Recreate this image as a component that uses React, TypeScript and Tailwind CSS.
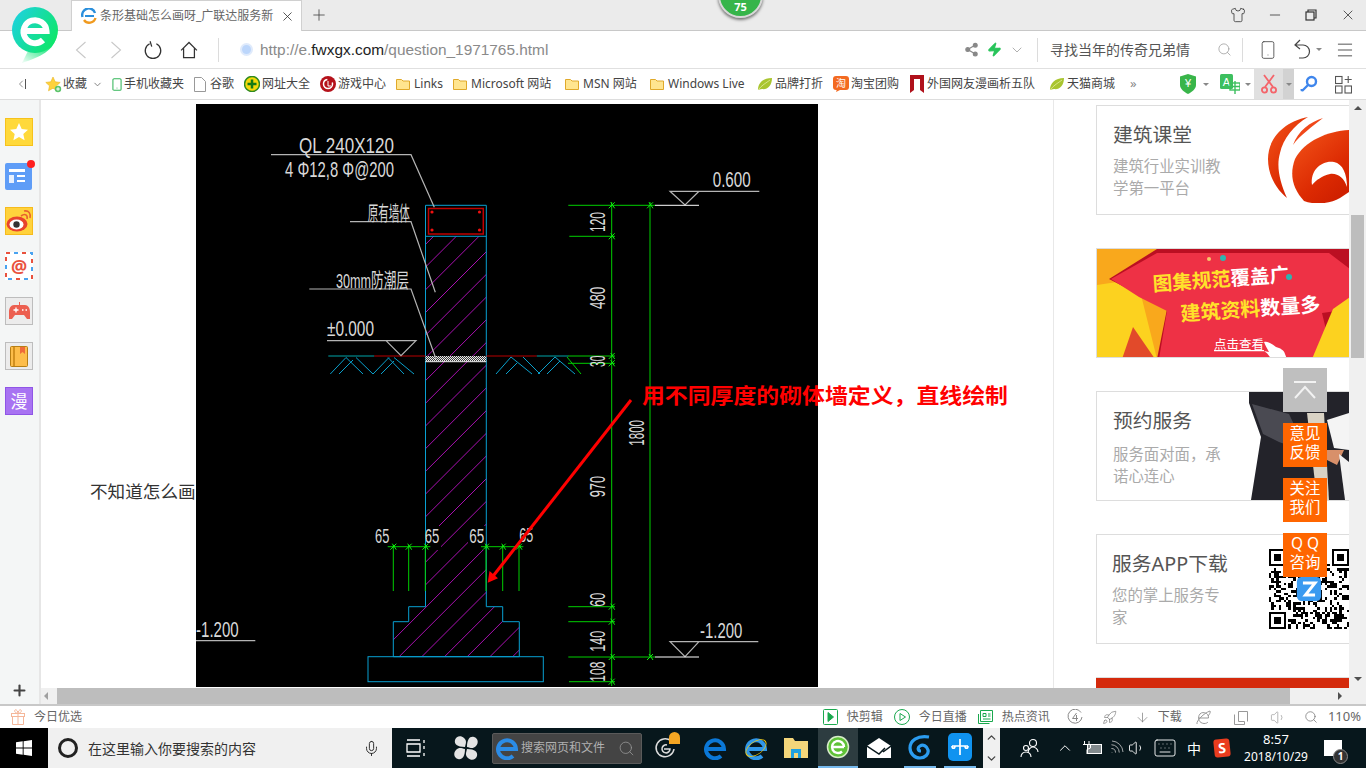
import React from 'react';
import {
  ArrowDown, ChevronDown, ChevronLeft, ChevronUp, Keyboard, Menu, Mic, Minus, Plus,
  Rocket, Search, Share2, Shirt, Smartphone, Volume1, Wifi, X, Zap,
} from 'lucide-react';

const CAD_FONT = '"Liberation Sans", "Noto Sans CJK SC", sans-serif';

// --- small drawings -------------------------------------------------------

const Folder = () => (
  <svg width="14" height="14" viewBox="0 0 14 14">
    <path d="M.5 2.5h5l1.5 1.5h6.500v8.500H.5z" fill="#ffe58f" stroke="#e0a92a" />
  </svg>
);

const Leaf = () => (
  <svg width="16" height="14" viewBox="0 0 16 14">
    <path d="M1 13C1 6 6 1 15 1c0 8-5 12-10 11-2 0-3 1-4 1z" fill="#a9c52f" />
    <path d="M1 13C5 8 9 6 13 3" stroke="#d7e58a" fill="none" />
  </svg>
);

const StarIcon = () => (
  <svg width="17" height="17" viewBox="0 0 17 17">
    <path d="M8 1l2.200 4.800 5 .6-3.700 3.400 1 5-4.500-2.600-4.500 2.600 1-5L.8 6.400l5-.6z" fill="#ffd23c" stroke="#e8b422" strokeWidth=".6" />
    <circle cx="13" cy="13" r="3.200" fill="#5cc46a" />
    <path d="M11.200 13h3.600M13 11.200v3.600" stroke="#fff" />
  </svg>
);

const Globe360 = () => (
  <svg width="16" height="16" viewBox="0 0 16 16">
    <circle cx="8" cy="8" r="7.500" fill="#f5d90a" stroke="#2f8a1f" strokeWidth="1.500" />
    <path d="M8 3.500v9M3.500 8h9" stroke="#157a15" strokeWidth="2.500" />
  </svg>
);

const GameBadge = () => (
  <svg width="16" height="16" viewBox="0 0 16 16">
    <circle cx="8" cy="8" r="8" fill="#b5121b" />
    <circle cx="8" cy="8" r="4.500" fill="none" stroke="#fff" strokeWidth="1.500" strokeDasharray="20 6" />
    <path d="M8 5v5h3" stroke="#fff" fill="none" />
  </svg>
);

const NavChevron = ({ flip = false }: { flip?: boolean }) => (
  <svg width="12" height="18" viewBox="0 0 12 18" fill="none" stroke="#c8c8c8" strokeWidth="1.100">
    <path d={flip ? 'M1.500 1l9 8-9 8' : 'M10.500 1l-9 8 9 8'} />
  </svg>
);

const ReloadIcon = () => (
  <svg width="20" height="20" viewBox="0 0 24 24" fill="none" stroke="#333" strokeWidth="1.500">
    <path d="M8 4.500a9.300 9.300 0 1 0 8 0M8.500 1.500L10.500 8" />
  </svg>
);

const HomeIcon = () => (
  <svg width="20" height="20" viewBox="0 0 24 24" fill="none" stroke="#333" strokeWidth="1.500">
    <path d="M2.500 12.500L12 3l9.500 9.500M5.500 10v11h13V10" />
  </svg>
);

const UndoIcon = () => (
  <svg width="20" height="22" viewBox="0 0 20 22" fill="none" stroke="#444" strokeWidth="1.200">
    <path d="M7 1L2 6l5 4M2 6h8a6.500 6.500 0 0 1 0 13H6" />
  </svg>
);

const RestoreIcon = () => (
  <svg width="12" height="12" viewBox="0 0 12 12" fill="none" stroke="#333" strokeWidth="1.200">
    <path d="M3 3V1h8v8H9" />
    <rect x="1" y="3" width="8" height="8" />
  </svg>
);

const ShieldIcon = () => (
  <svg width="16" height="20" viewBox="0 0 16 20">
    <path d="M8 0l8 2.500V11c0 4-4 7-8 9-4-2-8-5-8-9V2.500z" fill="#39b54a" />
    <text x="8" y="13" textAnchor="middle" fontSize="11" fill="#fff" fontFamily={CAD_FONT}>¥</text>
  </svg>
);

const TranslateIcon = () => (
  <svg width="20" height="20" viewBox="0 0 20 20">
    <rect width="13" height="15" rx="1.500" fill="#3dbf5f" />
    <text x="6.500" y="12" textAnchor="middle" fontSize="11" fill="#fff" fontFamily={CAD_FONT}>A</text>
    <rect x="10" y="9" width="10" height="7" fill="none" stroke="#3dbf5f" strokeWidth="1.400" />
    <path d="M15 7v13M10 12.500h10" stroke="#3dbf5f" strokeWidth="1.400" />
  </svg>
);

const ScissorsIcon = () => (
  <svg width="16" height="20" viewBox="0 0 16 20" fill="none" stroke="#f4646a" strokeWidth="1.800">
    <path d="M3 1l9 12M13 1L4 13" />
    <circle cx="3.500" cy="16" r="2.600" />
    <circle cx="12.500" cy="16" r="2.600" />
  </svg>
);

const KeyIcon = () => (
  <svg width="18" height="18" viewBox="0 0 18 18" fill="none" stroke="#3f86ec" strokeWidth="2.400">
    <circle cx="11.500" cy="6.500" r="4.500" />
    <path d="M8 10L2 16M2 16l-.5-2" />
  </svg>
);

const AppsIcon = () => (
  <svg width="17" height="19" viewBox="0 0 17 19" fill="none" stroke="#555" strokeWidth="1.100">
    <rect x=".5" y="1.500" width="6.500" height="7" />
    <rect x=".5" y="11" width="6.500" height="7" />
    <rect x="10" y="11" width="6.500" height="7" />
    <path d="M13.200 1v7M9.700 4.500h7" />
  </svg>
);

const TaobaoIcon = () => (
  <svg width="16" height="16" viewBox="0 0 16 16">
    <rect width="16" height="14" rx="3" fill="#f36a21" />
    <path d="M4 13l-1 3 4-2z" fill="#f36a21" />
    <text x="8" y="11" textAnchor="middle" fontSize="10" fill="#fff" fontFamily={CAD_FONT}>淘</text>
  </svg>
);

const RibbonIcon = () => (
  <svg width="14" height="18" viewBox="0 0 14 18">
    <path d="M0 0h14v18l-4-3V4H4v11l-4 3z" fill="#b0111b" />
  </svg>
);

const LogoE9 = () => (
  <svg width="46" height="56" viewBox="0 0 46 56">
    <defs>
      <linearGradient id="logoGrad" x1="0" y1="0" x2="1" y2="0.6">
        <stop offset="0" stopColor="#1fd0ea" />
        <stop offset="1" stopColor="#0fe66c" />
      </linearGradient>
      <linearGradient id="logoTail" x1="0.9" y1="0" x2="0.1" y2="1">
        <stop offset="0.3" stopColor="#12e378" />
        <stop offset="1" stopColor="#12e378" stopOpacity="0.1" />
      </linearGradient>
    </defs>
    <path d="M45 28C42 44 28 50 10 56l8-16z" fill="url(#logoTail)" />
    <circle cx="23" cy="23" r="23" fill="url(#logoGrad)" />
    <path d="M12 24h22.500A11.500 11.500 0 1 0 31 33" fill="none" stroke="#fff" strokeWidth="6" />
  </svg>
);

const TabFavicon = () => (
  <svg width="16" height="16" viewBox="0 0 16 16" fill="none" strokeWidth="2.400">
    <path d="M1.500 9A6.500 6.500 0 0 1 14 5" stroke="#2a8fdc" />
    <path d="M4 8h9" stroke="#2a8fdc" strokeWidth="2" />
    <path d="M14.500 10A6.500 6.500 0 0 1 3 12" stroke="#f09a1f" />
  </svg>
);

// --- sidebar --------------------------------------------------------------

const SideYellowStar = () => (
  <div className="w-[28px] h-[28px] bg-[#ffd93b] border border-[#f6c21c] flex items-center justify-center">
    <svg width="20" height="20" viewBox="0 0 20 20"><path d="M10 1l2.700 6 6.300.7-4.700 4.300 1.300 6.300L10 15l-5.600 3.300L5.700 12 1 7.700 7.300 7z" fill="#fff" /></svg>
  </div>
);

const SideNews = () => (
  <div className="relative w-[27px] h-[27px] rounded-[2px] bg-[#5f9df7] flex items-center justify-center">
    <svg width="20" height="16" viewBox="0 0 20 16" fill="#fff">
      <rect y="0" width="16" height="3" />
      <rect y="6" width="5" height="8" opacity=".85" />
      <rect x="8" y="6" width="8" height="2" />
      <rect x="8" y="11" width="8" height="2" />
    </svg>
    <span className="absolute -top-[3px] -right-[3px] w-[8px] h-[8px] rounded-full bg-[#ff2020]" />
  </div>
);

const SideWeibo = () => (
  <div className="w-[28px] h-[28px] bg-[#ffd23c] border border-[#f6bb1c] flex items-center justify-center">
    <svg width="26" height="24" viewBox="0 0 26 24">
      <ellipse cx="11" cy="15" rx="10.500" ry="7.500" fill="#e8432d" />
      <ellipse cx="10.500" cy="15.500" rx="7" ry="5" fill="#fff" />
      <circle cx="10.500" cy="15.500" r="3.200" fill="#333" />
      <path d="M15 7c4-3 7-1 6 3M18 2c5-1 7 3 6 7" stroke="#e8612d" fill="none" strokeWidth="1.600" />
    </svg>
  </div>
);

const SideMail = () => (
  <div className="relative w-[28px] h-[28px] flex items-center justify-center bg-white">
    <svg className="absolute inset-0" width="28" height="28" viewBox="0 0 28 28" fill="none" strokeWidth="2">
      <rect x="1" y="1" width="26" height="26" stroke="#e9523e" strokeDasharray="4 12" />
      <rect x="1" y="1" width="26" height="26" stroke="#4aa3f0" strokeDasharray="4 12" strokeDashoffset="8" />
    </svg>
    <span className="text-[18px] leading-none font-bold text-[#e9523e]">@</span>
  </div>
);

const SideGame = () => (
  <div className="w-[28px] h-[28px] bg-[#ececec] border border-[#bdbdbd] flex items-center justify-center">
    <svg width="21" height="18" viewBox="0 0 21 18">
      <path d="M10 0h1v3h5c3 0 5 3 5 7v7h-3l-3-4H6l-3 4H0v-7c0-4 2-7 5-7h5z" fill="#ec5f50" />
      <path d="M4.500 8h5M7 5.500v5M13 8h1.500M16.500 8H18" stroke="#fff" strokeWidth="1.300" />
    </svg>
  </div>
);

const SideBook = () => (
  <div className="w-[28px] h-[28px] bg-[#ececec] border border-[#bdbdbd] flex items-center justify-center">
    <svg width="18" height="21" viewBox="0 0 18 21">
      <rect x=".5" y=".5" width="17" height="20" rx="1" fill="#fdbd4a" stroke="#b77f14" />
      <rect x="3" y="1" width="2" height="19" fill="#d2901f" />
      <path d="M10 1h5v7l-2.500-2-2.500 2z" fill="#ef6a3a" />
    </svg>
  </div>
);

const SideManga = () => (
  <div className="w-[28px] h-[28px] bg-[#a873f2] border border-[#8f55e6] flex items-center justify-center text-white text-[17px] leading-none">
    漫
  </div>
);

// --- CAD drawing ----------------------------------------------------------

type CadTextProps = { x: number; y: number; w: number; size?: number; fill?: string; rotate?: boolean; children: string };

const CadText = ({ x, y, w, size = 22, fill = '#d8d8d8', rotate = false, children }: CadTextProps) => (
  <text
    transform={rotate ? `translate(${x} ${y}) rotate(-90)` : `translate(${x} ${y})`}
    textLength={w}
    lengthAdjust="spacingAndGlyphs"
    fontSize={size}
    fill={fill}
    fontFamily={CAD_FONT}
  >
    {children}
  </text>
);

const HATCH = Array.from({ length: 23 }, (_, i) => 528.8 + 22.7 * (i - 7));

const TICKS: [number, number][] = [
  [415.7, 101.3], [415.7, 132.3], [415.7, 252], [415.7, 259.3], [415.7, 502.7], [415.7, 517.7], [415.7, 553], [415.7, 577.7],
  [454, 101.3], [454, 553],
  [197.3, 442.7], [212.7, 442.7], [229.3, 442.7], [290, 442.7], [306.7, 442.7], [323, 442.7],
];

const BLUE = '#08a0d2';
const GREEN = '#00cf00';
const LEADER = '#b4b4b4';

const Drawing = () => (
  <svg width="622" height="583" viewBox="0 0 622 583" className="block bg-black overflow-visible">
    <defs>
      <clipPath id="wallClip">
        <path d="M229.500 132.300H290.300V502.700H306.700V517.700H323.300V552.700H197.300V517.700H212.700V502.700H229.500Z" />
      </clipPath>
      <pattern id="damp" width="2" height="2" patternUnits="userSpaceOnUse">
        <rect width="2" height="2" fill="#3a3a3a" />
        <rect width="1" height="1" fill="#e8e8e8" />
        <rect x="1" y="1" width="1" height="1" fill="#e8e8e8" />
      </pattern>
    </defs>

    {/* hatch */}
    <g clipPath="url(#wallClip)" stroke="#a810b0" strokeWidth="1">
      {HATCH.map((c) => (
        <line key={c} x1={150} y1={c - 150} x2={400} y2={c - 400} />
      ))}
    </g>
    <rect x="231" y="422" width="14" height="24" fill="#000" />
    <rect x="272" y="422" width="17" height="24" fill="#000" />

    {/* wall outline */}
    <g fill="none" stroke={BLUE} strokeWidth="1">
      <path d="M229.500 101.300H290.300V502.700H306.700V517.700H323.300V552.700H197.300V517.700H212.700V502.700H229.500Z" />
      <path d="M229.500 132.300H290.300" />
      <rect x="172" y="552.700" width="175.300" height="25" />
    </g>

    {/* beam rebar */}
    <rect x="232.500" y="104.500" width="54.800" height="25.500" fill="none" stroke="#c00000" strokeWidth="1.500" />
    <g fill="#f01010">
      <circle cx="236" cy="108" r="1.600" />
      <circle cx="283.500" cy="108" r="1.600" />
      <circle cx="236" cy="126" r="1.600" />
      <circle cx="283.500" cy="126" r="1.600" />
    </g>

    {/* damp proof layer and ground */}
    <rect x="229.500" y="252" width="60.800" height="5" fill="url(#damp)" />
    <path d="M229.500 257.700H290.300" stroke="#fff" />
    <path d="M132.300 252H178.300M340.700 252H372.300" stroke="#00a3a8" strokeWidth="1.200" />
    <path d="M178.300 252H229.500M290.300 252H340.700" stroke="#b80000" strokeWidth="1.200" />
    <path
      d="M134.300 270L150 253.500M143 270L157 256M150 253.500L167 270M160 253.500L177 270M177 270L193 253.500M185 270L198 257M198 253.500L218 270M192 253.500L208 270M300 270L315 253M310 270L321 259M315 253L336 270M327 253L344 270M342 270L359 253M351 270L364 257M359 253L379 270"
      fill="none"
      stroke="#0aa0cc"
    />
    <path d="M371 253L385 270" stroke={GREEN} />

    {/* leaders and labels */}
    <g fill="none" stroke={LEADER} strokeWidth="1.200">
      <path d="M75 50.700H215L238.300 103.300" />
      <path d="M154 117.700H215L239.300 188.300" />
      <path d="M113.300 185H215L240 255" />
      <path d="M131 236.700H220L205 251.700L190 236.700" />
      <path d="M563.300 87.300H474L489 101L503 87.300" />
      <path d="M562.300 537.700H474L489 552.700L503 537.700" />
      <path d="M0 536.700H59.300" />
    </g>
    <path d="M459 101.300H503M459 553H503" stroke="#fff" />
    <CadText x={103} y={49} w={95}>QL  240X120</CadText>
    <CadText x={89} y={72.700} w={109}>4 Φ12,8 Φ@200</CadText>
    <CadText x={171.700} y={116.700} w={42} size={20}>原有墙体</CadText>
    <CadText x={140} y={184} w={73} size={20}>30mm防潮层</CadText>
    <CadText x={131} y={232.300} w={47}>±0.000</CadText>
    <CadText x={516.700} y={82.700} w={38}>0.600</CadText>
    <CadText x={504} y={533.700} w={42.300}>-1.200</CadText>
    <CadText x={0} y={532.700} w={42.700}>-1.200</CadText>

    {/* dimensions */}
    <g fill="none" stroke={GREEN} strokeWidth="1">
      <path d="M415.700 98V582M454 98V552.700" />
      <path d="M372.300 101.300H459M373.300 132.300H419M372 252H419M372 259.300H419M372.300 502.700H419M372.300 517.700H419M372.300 553H459M373 577.700H419" />
      <path d="M191.700 442.700H234.300M285 442.700H327.300" />
      <path d="M197.300 441V487M212.700 441V487M229.300 441V487M290 441V487M306.700 441V487M323 441V487" />
    </g>
    <g stroke="#10ee10" strokeWidth="1">
      {TICKS.map(([x, y]) => (
        <path key={`${x}-${y}`} d={`M${x - 3} ${y + 3}L${x + 3} ${y - 3}M${x - 1} ${y - 3}L${x + 3} ${y + 3}`} />
      ))}
    </g>
    <CadText x={409.300} y={128} w={20} rotate>120</CadText>
    <CadText x={409.300} y={205} w={22.300} rotate>480</CadText>
    <CadText x={409.300} y={263} w={11.300} rotate>30</CadText>
    <CadText x={447.700} y={341.700} w={25.700} rotate>1800</CadText>
    <CadText x={409} y={393.300} w={21.300} rotate>970</CadText>
    <CadText x={409} y={502.700} w={14} rotate>60</CadText>
    <CadText x={409} y={547.700} w={21} rotate>140</CadText>
    <CadText x={409} y={577.700} w={20} rotate>108</CadText>
    <CadText x={179} y={438.700} w={14.300} size={20}>65</CadText>
    <CadText x={228.700} y={438.700} w={14.600} size={20}>65</CadText>
    <CadText x={273.300} y={438.700} w={15} size={20}>65</CadText>
    <CadText x={323.300} y={437.700} w={14} size={20}>65</CadText>

    {/* annotation */}
    <path d="M435 296L294 476" stroke="#ff0000" strokeWidth="3" />
    <path d="M291.700 478.700L293.500 467L302 474.300Z" fill="#ff0000" />
    <text x={446} y={299} textLength={366} lengthAdjust="spacingAndGlyphs" fontSize="21" fontWeight="700" fill="#ff0000" fontFamily='"Liberation Serif", "Noto Sans CJK SC", serif'>
      用不同厚度的砌体墙定义，直线绘制
    </text>
  </svg>
);

// --- right column cards ---------------------------------------------------

const SwirlLogo = () => (
  <svg width="81" height="86" viewBox="0 0 81 86">
    <defs>
      <linearGradient id="swirlA" x1="0" y1="0" x2="0.7" y2="1">
        <stop offset="0" stopColor="#f4561a" />
        <stop offset="0.7" stopColor="#dc2a02" />
        <stop offset="1" stopColor="#cf2000" />
      </linearGradient>
    </defs>
    <path d="M40 0C15 5 0 22 0 42c0 16 8 30 19 39C12 65 8 50 12 36 15 22 26 8 40 0z" fill="url(#swirlA)" />
    <path d="M55 1C42 5 30 14 25 28 32 18 44 10 55 1z" fill="#f0481a" />
    <path d="M81 13C60 14 36 24 27 42c-6 16-2 30 9 42 10 4 26 3 36-3l9-6z" fill="url(#swirlA)" />
    <path d="M44 68c-2-15 10-25 22-23 9 2 13 12 13 25-3-9-9-14-17-13-8 2-14 6-18 11z" fill="#fff" />
  </svg>
);

const SuitPhoto = () => (
  <svg width="100" height="108" viewBox="0 0 100 108">
    <path d="M0 0H100V108H2L12 45 0 11z" fill="#23232a" />
    <path d="M3 12L40 22 58 60 30 50 14 42z" fill="#4a4a52" />
    <path d="M58 21H75L80 108H68z" fill="#d9d2c4" />
    <path d="M78 28L100 21V58L85 56z" fill="#f4f4f4" />
    <path d="M78 58H95L88 73 78 68z" fill="#d8906a" />
    <path d="M90 62L100 70V108H96z" fill="#f2f2f2" />
  </svg>
);

const QR_SIZE = 33;
const inFinder = (r: number, c: number) =>
  (r < 8 && c < 8) || (r < 8 && c >= QR_SIZE - 8) || (r >= QR_SIZE - 8 && c < 8);
const finderOn = (r: number, c: number) => {
  const rr = r >= QR_SIZE - 8 ? r - (QR_SIZE - 7) : r;
  const cc = c >= QR_SIZE - 8 ? c - (QR_SIZE - 7) : c;
  if (rr < 0 || cc < 0 || rr > 6 || cc > 6) return false;
  return rr === 0 || rr === 6 || cc === 0 || cc === 6 || (rr >= 2 && rr <= 4 && cc >= 2 && cc <= 4);
};
const QR_CELLS: [number, number][] = [];
for (let r = 0; r < QR_SIZE; r++) {
  for (let c = 0; c < QR_SIZE; c++) {
    const on = inFinder(r, c) ? finderOn(r, c) : ((r * 31 + c * 17) ^ (r * c * 5)) % 5 < 2;
    if (on) QR_CELLS.push([r, c]);
  }
}

const QrCode = () => (
  <svg width="80" height="80" viewBox="0 0 33 33" shapeRendering="crispEdges">
    {QR_CELLS.map(([r, c]) => (
      <rect key={`${r}-${c}`} x={c} y={r} width="1" height="1" fill="#000" />
    ))}
    <rect x="11.500" y="11.500" width="10" height="10" rx="2" fill="#3a9af0" shapeRendering="auto" />
    <path d="M14 14h5l-4 5h4" fill="none" stroke="#fff" strokeWidth="1.200" shapeRendering="auto" />
  </svg>
);

const PromoBanner = () => (
  <svg width="253" height="110" viewBox="0 0 253 110" className="block">
    <rect width="253" height="110" fill="#f9a81c" />
    <path d="M0 110V36L40 30 60 110z" fill="#fcd21f" />
    <path d="M12 30L60 0H253V60L215 110H60L70 60z" fill="#bb0f22" />
    <path d="M60 4H232L253 20V60L225 64 236 110H62L70 62 42 48 14 30z" fill="#ee3145" />
    <path d="M215 110L236 60 253 48V110z" fill="#fcd21f" />
    <path d="M25 110L36 78 58 110z" fill="#e24a2a" />
    <circle cx="112" cy="10" r="2" fill="#f6c76b" />
    <circle cx="192" cy="28" r="3" fill="#2eb5b0" />
    <circle cx="126" cy="9" r="3" fill="#2eb5b0" />
    <g transform="rotate(-4 56 38)" fontFamily='"Noto Sans CJK SC", sans-serif' fontWeight="700" fontSize="19.500">
      <text x="56" y="42" fill="#ffe22a">图集规范<tspan fill="#fff">覆盖广</tspan></text>
    </g>
    <g transform="rotate(-4 84 72)" fontFamily='"Noto Sans CJK SC", sans-serif' fontWeight="700" fontSize="20">
      <text x="84" y="72" fill="#ffe22a">建筑资料<tspan fill="#fff">数量多</tspan></text>
    </g>
    <text x="117" y="100" fontSize="12.500" fill="#fff" textDecoration="underline" fontFamily='"Noto Sans CJK SC", sans-serif'>点击查看</text>
    <path d="M167 93c4-1 8 2 12 5 4 1 8 3 9 7l2 5h-16c-2-4-4-6-7-8l5 1c-2-4-4-7-5-10z" fill="#fff" />
  </svg>
);

type CardProps = { title: string; desc: string; children: React.ReactNode; titleClass?: string; descClass?: string };

const ServiceCard = ({ title, desc, children, titleClass = 'pl-[16px]', descClass = 'mt-[7px]' }: CardProps) => (
  <div className="w-[253px] h-[110px] shrink-0 border border-r-0 border-[#dddddd] flex justify-between items-center overflow-hidden">
    <div className={`${titleClass} self-start pt-[15px]`}>
      <div className="text-[19.800px] leading-[28px] text-[#555555] whitespace-nowrap">{title}</div>
      <div className={`${descClass} w-[110px] text-[15.400px] leading-[22px] text-[#aaaaaa]`}>{desc}</div>
    </div>
    {children}
  </div>
);

// --- browser chrome data ---------------------------------------------------

type Bookmark = { label: string; icon: React.ReactNode; box: string; iconBox: string };

const BOOKMARKS: Bookmark[] = [
  { label: '手机收藏夹', icon: <Smartphone size={15} strokeWidth={1.800} className="-ml-[1px] text-[#35b65a]" />, box: 'w-[83px]', iconBox: 'w-[13px]' },
  { label: '谷歌', icon: <svg width="12" height="15" viewBox="0 0 12 15" fill="#fff" stroke="#999"><path d="M.5.500h7l4 4v10H.5z" /></svg>, box: 'w-[50px]', iconBox: 'w-[16px]' },
  { label: '网址大全', icon: <Globe360 />, box: 'w-[76px]', iconBox: 'w-[18px]' },
  { label: '游戏中心', icon: <GameBadge />, box: 'w-[76px]', iconBox: 'w-[18px]' },
  { label: 'Links', icon: <Folder />, box: 'w-[57px]', iconBox: 'w-[18px]' },
  { label: 'Microsoft 网站', icon: <Folder />, box: 'w-[112px]', iconBox: 'w-[18px]' },
  { label: 'MSN 网站', icon: <Folder />, box: 'w-[85px]', iconBox: 'w-[18px]' },
  { label: 'Windows Live', icon: <Folder />, box: 'w-[107px]', iconBox: 'w-[18px]' },
  { label: '品牌打折', icon: <Leaf />, box: 'w-[76px]', iconBox: 'w-[18px]' },
  { label: '淘宝团购', icon: <TaobaoIcon />, box: 'w-[77px]', iconBox: 'w-[18px]' },
  { label: '外国网友漫画析五队', icon: <RibbonIcon />, box: 'w-[139px]', iconBox: 'w-[17px]' },
  { label: '天猫商城', icon: <Leaf />, box: 'w-[81px]', iconBox: 'w-[18px]' },
];

const TinyCaret = () => <span className="block w-0 h-0 border-x-[3px] border-x-transparent border-t-[3px] border-t-[#888888]" />;

const TabBar = () => (
  <div className="h-[31px] shrink-0 bg-[#ebebeb] border-b border-[#c8c8c8] flex items-end">
    <div className="relative ml-[71px] -mb-px w-[231px] h-[31px] bg-white border-x border-t border-[#d0d0d0] flex items-center pl-[9px]">
      <TabFavicon />
      <span className="ml-[3px] w-[174px] whitespace-nowrap text-[12px] text-[#666666]">条形基础怎么画呀_广联达服务新</span>
      <X size={15} strokeWidth={1.300} className="ml-[6px] text-[#333333]" />
    </div>
    <Plus size={18} strokeWidth={1.100} className="ml-[8px] mb-[6px] text-[#444444]" />
    <div className="ml-auto flex items-center h-full text-[#333333]">
      <Shirt size={16} strokeWidth={1.200} />
      <Minus size={16} strokeWidth={1.200} className="ml-[21px]" />
      <span className="ml-[22px]"><RestoreIcon /></span>
      <X size={16} strokeWidth={1.200} className="ml-[23px] mr-[10px]" />
    </div>
  </div>
);

const Toolbar = () => (
  <div className="h-[38px] shrink-0 bg-white border-b border-[#e0e0e0] flex items-center">
    <span className="ml-[75px] flex"><NavChevron /></span>
    <span className="ml-[23px] flex"><NavChevron flip /></span>
    <span className="ml-[21px] flex"><ReloadIcon /></span>
    <span className="ml-[16px] flex"><HomeIcon /></span>
    <span className="ml-[19px] w-px h-[24px] bg-[#dcdcdc]" />
    <span className="ml-[21px] w-[13px] h-[13px] rounded-full bg-[#bcd6fb] border-[2px] border-[#dfeafb]" />
    <span className="ml-[7px] text-[15.400px] text-[#8a8a8a] font-['Liberation_Sans',sans-serif] whitespace-nowrap">
      http://e.<span className="text-[#222222]">fwxgx.com</span>/question_1971765.html
    </span>
    <div className="ml-auto flex items-center">
      <Share2 size={15} fill="#888888" className="text-[#888888]" />
      <Zap size={15} fill="#28c45a" className="ml-[8px] text-[#28c45a]" />
      <ChevronDown size={16} strokeWidth={1} className="ml-[7px] text-[#888888]" />
      <span className="ml-[12px] w-px h-[24px] bg-[#dcdcdc]" />
      <span className="ml-[12px] w-[140px] text-[14px] text-[#555555] whitespace-nowrap">寻找当年的传奇兄弟情</span>
      <Search size={15} strokeWidth={1.200} className="ml-[27px] text-[#999999]" />
      <span className="ml-[10px] w-px h-[24px] bg-[#dcdcdc]" />
      <Smartphone size={20} strokeWidth={1} className="ml-[15px] text-[#444444]" />
      <span className="ml-[15px] flex"><UndoIcon /></span>
      <span className="ml-[3px] flex"><TinyCaret /></span>
      <Menu size={20} strokeWidth={1} className="ml-[13px] mr-[11px] text-[#333333]" />
    </div>
  </div>
);

const BookmarksBar = () => (
  <div className="h-[31px] shrink-0 bg-white border-b border-[#dddddd] flex items-center text-[12px] text-[#444444]">
    <span className="ml-[15px] w-[30px] flex items-center text-[#555555]">
      <ChevronLeft size={12} strokeWidth={1.300} />
      <span className="-ml-[2px] w-px h-[10px] bg-[#555555]" />
    </span>
    <div className="w-[66px] flex items-center">
      <span className="w-[18px] flex"><StarIcon /></span>
      <span>收藏</span>
      <ChevronDown size={11} className="ml-[5px] text-[#777777]" />
    </div>
    {BOOKMARKS.map((b) => (
      <div key={b.label} className={`${b.box} flex items-center whitespace-nowrap`}>
        <span className={`${b.iconBox} flex items-center shrink-0`}>{b.icon}</span>
        <span>{b.label}</span>
      </div>
    ))}
    <span className="text-[13px] text-[#888888]">»</span>
    <div className="ml-auto flex items-center h-full">
      <ShieldIcon />
      <span className="ml-[7px] flex"><TinyCaret /></span>
      <span className="ml-[11px] flex"><TranslateIcon /></span>
      <span className="ml-[5px] flex"><TinyCaret /></span>
      <div className="ml-[3px] h-full flex bg-[#e0e0e0]">
        <span className="w-[29px] flex items-center justify-center"><ScissorsIcon /></span>
        <span className="w-[11px] bg-[#d2d2d2] flex items-center justify-center"><TinyCaret /></span>
      </div>
      <span className="ml-[6px] flex"><KeyIcon /></span>
      <span className="ml-[17px] mr-[14px] flex"><AppsIcon /></span>
    </div>
  </div>
);

const Sidebar = () => (
  <div className="w-[41px] shrink-0 bg-[#f4f6f6] border-r-2 border-[#e6e6e6] flex flex-col items-start pl-[5px] pt-[18px] pb-[5px]">
    <div className="flex flex-col gap-[17px]">
      <SideYellowStar />
      <SideNews />
      <SideWeibo />
      <SideMail />
      <SideGame />
      <SideBook />
      <SideManga />
    </div>
    <Plus size={17} strokeWidth={3} className="mt-auto ml-[6px] text-[#444444]" />
  </div>
);

const ScrollV = () => (
  <div className="w-[17px] shrink-0 bg-[#f0f0f0] flex flex-col items-center">
    <span className="mt-[6px] w-0 h-0 border-x-[4px] border-x-transparent border-b-[4px] border-b-[#505050]" />
    <span className="mt-[105px] w-[13px] h-[143px] bg-[#bdbdbd]" />
    <span className="mt-auto mb-[7px] w-0 h-0 border-x-[4px] border-x-transparent border-t-[4px] border-t-[#505050]" />
  </div>
);

const ScrollH = () => (
  <div className="h-[16px] shrink-0 bg-[#f0f0f0] flex items-center">
    <span className="ml-[3px] w-0 h-0 border-y-[4px] border-y-transparent border-r-[4px] border-r-[#a0a0a0]" />
    <span className="ml-[9px] w-[1233px] h-full bg-[#bdbdbd]" />
    <span className="ml-[48px] w-0 h-0 border-y-[4px] border-y-transparent border-l-[4px] border-l-[#505050]" />
  </div>
);

const Page = () => (
  <div className="flex-1 min-w-0 h-[588px] bg-white flex overflow-hidden">
    <div className="w-[155px] shrink-0 pl-[49px] pt-[378px] whitespace-nowrap text-[17.600px] leading-[26px] text-[#333333]">
      不知道怎么画
    </div>
    <div className="w-[622px] shrink-0 pt-[4px]">
      <Drawing />
    </div>
    <div className="w-[235px] shrink-0" />
    <div className="w-[296px] shrink-0 border-l border-[#e8e8e8] pl-[42px] pt-[5px] flex flex-col gap-[33px]">
      <ServiceCard title="建筑课堂" desc="建筑行业实训教学第一平台">
        <SwirlLogo />
      </ServiceCard>
      <div className="w-[253px] h-[110px] shrink-0 overflow-hidden border border-r-0 border-[#dddddd]">
        <PromoBanner />
      </div>
      <ServiceCard title="预约服务" desc="服务面对面，承诺心连心" descClass="mt-[9px]">
        <SuitPhoto />
      </ServiceCard>
      <ServiceCard title="服务APP下载" desc="您的掌上服务专家" titleClass="pl-[15px]">
        <QrCode />
      </ServiceCard>
      <div className="w-[253px] h-[12px] shrink-0 bg-[#d42a0c] border-t border-[#dddddd]" />
    </div>
  </div>
);

const FloatTools = () => (
  <div className="absolute left-[1283px] top-[368px] w-[44px] flex flex-col gap-[11px] text-white text-[15.400px] leading-[19px] text-center">
    <div className="h-[44px] bg-[#bfbfbf] flex items-center justify-center">
      <svg width="24" height="20" viewBox="0 0 24 20" fill="none" stroke="#f2f2f2" strokeWidth="2">
        <path d="M1 2h22M2 18L12 7l10 11" />
      </svg>
    </div>
    <div className="h-[44px] bg-[#ff6600] pt-px">意见<br />反馈</div>
    <div className="h-[44px] bg-[#ff6600] pt-px">关注<br />我们</div>
    <div className="h-[44px] bg-[#ff6600] pt-px">Q Q<br />咨询</div>
  </div>
);

const StatusBar = () => (
  <div className="h-[24px] shrink-0 bg-white border-t-2 border-[#c8c8c8] flex items-center text-[12px] text-[#666666] whitespace-nowrap">
    <svg className="ml-[10px]" width="16" height="16" viewBox="0 0 16 16" fill="none" stroke="#f5b79a">
      <rect x="1.500" y="4.500" width="13" height="3" />
      <path d="M2.500 7.500v8h11v-8M8 4.500v11M8 4.500C5 4 4 2 5 1s3 1 3 3.500c0-2.500 2-4.500 3-3.500s0 3-3 3.500" />
    </svg>
    <span className="ml-[8px]">今日优选</span>
    <div className="ml-auto flex items-center">
      <svg width="15" height="16" viewBox="0 0 15 16" fill="none" stroke="#1aa84e">
        <rect x=".5" y=".5" width="14" height="15" rx="1" />
        <path d="M5 3.500v9l5.500-4.500z" fill="#1aa84e" />
      </svg>
      <span className="ml-[9px]">快剪辑</span>
      <svg className="ml-[11px]" width="16" height="16" viewBox="0 0 16 16" fill="none" stroke="#1aa84e">
        <circle cx="8" cy="8" r="7.500" />
        <path d="M6 4.500v7L11.500 8z" />
      </svg>
      <span className="ml-[9px]">今日直播</span>
      <svg className="ml-[11px]" width="15" height="16" viewBox="0 0 15 16" fill="none" stroke="#1aa84e">
        <path d="M2.500 1.500h12v11h-12zM.5 5v9.500h11" />
        <path d="M5 4.500h3v3H5zM10 5h2.500M10 7h2.500M5 10h7.500" />
      </svg>
      <span className="ml-[9px]">热点资讯</span>
      <svg className="ml-[17px]" width="16" height="16" viewBox="0 0 16 16" fill="none" stroke="#888888">
        <path d="M14 3.500A7 7 0 1 0 15 8M9.500 4L5.500 9.500H11M9.500 6v6" />
      </svg>
      <Rocket size={15} strokeWidth={1.100} className="ml-[19px] text-[#777777]" />
      <ArrowDown size={15} strokeWidth={1.100} className="ml-[18px] text-[#777777]" />
      <span className="ml-[8px]">下载</span>
      <svg className="ml-[14px]" width="15" height="15" viewBox="0 0 15 15" fill="none" stroke="#999999">
        <path d="M2 8h10.500A5 5 0 0 0 3 5.500C2 9 3 13 8 13.500c2 0 3-.5 4-1.500M1 14C0 11 8 3 14 1c1 1-1 4-2 5" />
      </svg>
      <svg className="ml-[23px]" width="15" height="15" viewBox="0 0 15 15" fill="none" stroke="#999999">
        <path d="M4.500 1.500h9v10M.5 4.500v10h10v-3H4.500v-10" />
      </svg>
      <Volume1 size={17} strokeWidth={1} className="ml-[21px] text-[#999999]" />
      <Search size={14} strokeWidth={1.300} className="ml-[17px] text-[#777777]" />
      <span className="ml-[10px] mr-[5px] text-[13px]">110%</span>
    </div>
  </div>
);

const EdgeE = ({ color }: { color: string }) => (
  <svg width="24" height="24" viewBox="0 0 24 24" fill="none" stroke={color} strokeWidth="4">
    <path d="M3 13h18A9 9 0 1 0 18 20" />
  </svg>
);

const Taskbar = () => (
  <div className="h-[40px] shrink-0 bg-[#07171c] flex items-center whitespace-nowrap text-white">
    <div className="w-[48px] h-full bg-black flex items-center justify-center">
      <svg width="16" height="16" viewBox="0 0 16 16" fill="#fff">
        <path d="M0 2.300L6.700 1.300V7.500H0zM7.600 1.200L16 0V7.500H7.600zM0 8.400H6.700V14.700L0 13.700zM7.600 8.400H16V16L7.600 14.800z" />
      </svg>
    </div>
    <div className="w-[344px] h-full bg-[#f0f0f0] flex items-center text-[14px] text-[#333333]">
      <span className="ml-[10px] w-[20px] h-[20px] rounded-full border-[3px] border-[#222222]" />
      <span className="ml-[10px]">在这里输入你要搜索的内容</span>
      <Mic size={17} strokeWidth={1.300} className="ml-auto mr-[12px] text-[#222222]" />
    </div>
    <svg className="ml-[14px]" width="20" height="18" viewBox="0 0 20 18" fill="none" stroke="#fff" strokeWidth="1.300">
      <path d="M1 1h13M1 17h13M1 5h13v8H1zM18 1v3M18 7v3M18 14v3" />
    </svg>
    <svg className="ml-[27px]" width="26" height="26" viewBox="0 0 26 26" fill="#e4e4e4">
      <path d="M12 12C4 12 1 9 2 5s6-5 9-2 2 5 1 9zM14 12c0-8 3-11 7-10s5 6 2 9-5 2-9 1zM14 14c8 0 11 3 10 7s-6 5-9 2-2-5-1-9zM12 14c0 8-3 11-7 10s-5-6-2-9 5-2 9-1z" />
    </svg>
    <div className="ml-[13px] w-[150px] h-[31px] bg-[#444444] border border-[#5a5a5a] rounded-[2px] flex items-center text-[12px] text-[#b0b0b0]">
      <span className="ml-[2px] flex"><EdgeE color="#2b8ce6" /></span>
      <span className="ml-[2px]">搜索网页和文件</span>
      <Search size={17} strokeWidth={1.100} className="ml-auto mr-[6px] text-[#999999]" />
    </div>
    <div className="relative ml-[12px] w-[22px] h-[22px]">
      <svg width="22" height="22" viewBox="0 0 22 22" fill="none" stroke="#dddddd" strokeWidth="1.500">
        <path d="M17 4A9 9 0 1 0 20 12M13 8a4 4 0 1 0 3 4H10" />
      </svg>
      <span className="absolute -top-[5px] -right-[4px] w-[11px] h-[12px] rounded-t-full bg-[#f5a623]" />
    </div>
    <span className="ml-[27px] flex"><EdgeE color="#0b78d7" /></span>
    <span className="relative ml-[17px] flex">
      <EdgeE color="#2f97ea" />
      <span className="absolute inset-0 rounded-full border border-[#f2c811] rotate-[-35deg] scale-y-[0.55]" />
    </span>
    <svg className="ml-[16px]" width="24" height="22" viewBox="0 0 24 22">
      <path d="M0 1h9l2 3h13v17H0z" fill="#f4d67a" />
      <rect x="7" y="12" width="10" height="9" fill="#1fa1e0" />
      <rect x="10" y="16" width="4" height="5" fill="#f4d67a" />
    </svg>
    <div className="ml-[10px] w-[40px] h-full bg-[#2d3c40] border-b-2 border-[#76b9ed] flex items-center justify-center">
      <svg width="24" height="28" viewBox="0 0 24 28" fill="none">
        <circle cx="12" cy="14" r="10.500" fill="#5fc238" stroke="#d7ecc9" strokeWidth="1.500" />
        <path d="M6 14h12M18 14a6 6 0 1 0-2 4.500" stroke="#fff" strokeWidth="2.400" />
      </svg>
    </div>
    <svg className="ml-[9px]" width="24" height="20" viewBox="0 0 24 20">
      <path d="M0 8L12 0l12 8v12H0z" fill="#fff" />
      <path d="M0 8l12 8 6-6M24 8L16 14" fill="none" stroke="#07171c" strokeWidth="1.500" />
    </svg>
    <div className="ml-[13px] w-[32px] h-full border-b-2 border-[#76b9ed] flex items-center justify-center">
      <svg width="24" height="26" viewBox="0 0 24 26" fill="none" stroke="#2b9cf0" strokeWidth="3.200">
        <path d="M21 3C9 1 2 7 2 14c0 6 5 10 10 10s9-4 8-8-5-6-8-4-2 5 1 5" />
      </svg>
    </div>
    <div className="ml-[8px] w-[32px] h-full border-b-2 border-[#76b9ed] flex items-center justify-center">
      <div className="w-[24px] h-[28px] rounded-[5px] bg-[#1093f0] flex items-center justify-center">
        <svg width="18" height="18" viewBox="0 0 18 18" fill="none" stroke="#fff" strokeWidth="1.700">
          <path d="M9 1v16M1 8h16M1 8c0 3 3 3 3 0M17 8c0 3-3 3-3 0" />
        </svg>
      </div>
    </div>
    <div className="ml-[7px] w-[17px] h-full bg-[#f0f0f0] flex flex-col items-center justify-center gap-[8px] text-[#444444]">
      <ChevronUp size={13} strokeWidth={2.500} />
      <ChevronDown size={13} strokeWidth={2.500} />
    </div>
    <svg className="ml-[20px]" width="20" height="20" viewBox="0 0 20 20" fill="none" stroke="#fff" strokeWidth="1.100">
      <circle cx="13" cy="5" r="3.500" />
      <path d="M8 15c0-4 3-6 5-6s5 2 5 5" />
      <circle cx="6" cy="10" r="2.500" />
      <path d="M1 19c0-3 2-5 5-5s5 2 5 5" />
    </svg>
    <ChevronUp size={18} strokeWidth={1.300} className="ml-[16px]" />
    <svg className="ml-[9px]" width="20" height="16" viewBox="0 0 20 16" fill="none" stroke="#fff">
      <rect x="4.500" y="4.500" width="14" height="9" fill="#fff" fillOpacity=".5" />
      <path d="M1.500 1v3M6 1v3M0 4.500h7.500V8L4 9.500V14" />
    </svg>
    <Wifi size={18} strokeWidth={1} className="ml-[4px] text-[#cccccc] rotate-[45deg]" />
    <Volume1 size={18} strokeWidth={1.200} className="ml-[3px]" />
    <Keyboard size={24} strokeWidth={0.900} className="ml-[7px]" />
    <span className="ml-[9px] w-[16px] text-[14px] text-center">中</span>
    <span className="ml-[12px] w-[16px] h-[18px] rounded-[3px] bg-[#ea3c1e] text-[14px] leading-[18px] text-center font-bold rotate-[-6deg]">S</span>
    <div className="ml-[13px] w-[66px] flex flex-col items-center text-[12px] leading-[18px]">
      <span className="text-[13px]">8:57</span>
      <span>2018/10/29</span>
    </div>
    <div className="relative ml-[15px] w-[18px] h-[16px] bg-white">
      <span className="absolute -right-[6px] -bottom-[8px] w-[15px] h-[15px] rounded-full bg-[#333333] border border-[#888888] text-[10px] leading-[13px] text-center font-bold">1</span>
    </div>
  </div>
);

export default function App() {
  return (
    <div className="relative w-[1366px] h-[768px] overflow-hidden flex flex-col bg-white font-['Noto_Sans','Noto_Sans_CJK_SC',sans-serif]">
      <TabBar />
      <Toolbar />
      <BookmarksBar />
      <div className="h-[604px] shrink-0 flex">
        <Sidebar />
        <div className="flex-1 min-w-0 flex flex-col">
          <div className="flex h-[588px]">
            <Page />
            <ScrollV />
          </div>
          <ScrollH />
        </div>
      </div>
      <StatusBar />
      <Taskbar />

      {/* things that float above the window */}
      <div className="absolute left-[12px] top-[7px]">
        <LogoE9 />
      </div>
      <div className="absolute left-[718px] -top-[27px] w-[45px] h-[45px] rounded-full bg-[#36b54a] border-2 border-[#d8d8d8] shadow-[0_2px_3px_rgba(0,0,0,0.5)] flex items-end justify-center pb-[2px] text-[11px] leading-[14px] font-bold text-white">
        75
      </div>
      <FloatTools />
    </div>
  );
}
